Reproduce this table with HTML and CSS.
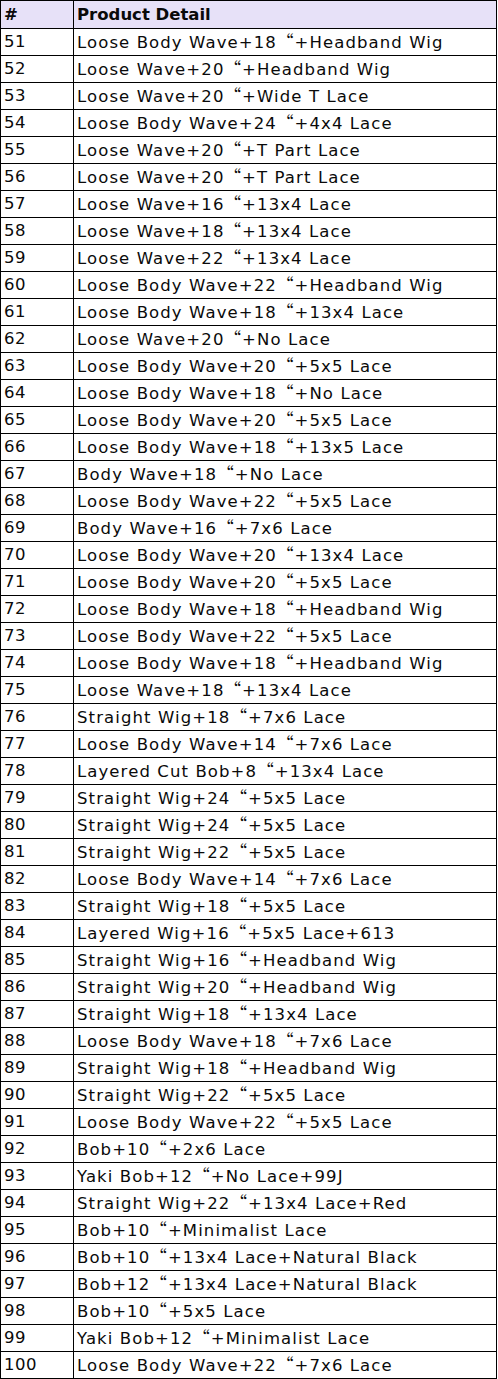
FILE: index.html
```html
<!DOCTYPE html>
<html>
<head>
<meta charset="utf-8">
<link rel="stylesheet" href="styles.css">
</head>
<body>
<table class="grid">
<thead>
<tr><th class="num">#</th><th class="detail">Product Detail</th></tr>
</thead>
<tbody>
<tr><td class="num">51</td><td>Loose Body Wave+18<span class="q">“</span>+Headband Wig</td></tr>
<tr><td class="num">52</td><td>Loose Wave+20<span class="q">“</span>+Headband Wig</td></tr>
<tr><td class="num">53</td><td>Loose Wave+20<span class="q">“</span>+Wide T Lace</td></tr>
<tr><td class="num">54</td><td>Loose Body Wave+24<span class="q">“</span>+4x4 Lace</td></tr>
<tr><td class="num">55</td><td>Loose Wave+20<span class="q">“</span>+T Part Lace</td></tr>
<tr><td class="num">56</td><td>Loose Wave+20<span class="q">“</span>+T Part Lace</td></tr>
<tr><td class="num">57</td><td>Loose Wave+16<span class="q">“</span>+13x4 Lace</td></tr>
<tr><td class="num">58</td><td>Loose Wave+18<span class="q">“</span>+13x4 Lace</td></tr>
<tr><td class="num">59</td><td>Loose Wave+22<span class="q">“</span>+13x4 Lace</td></tr>
<tr><td class="num">60</td><td>Loose Body Wave+22<span class="q">“</span>+Headband Wig</td></tr>
<tr><td class="num">61</td><td>Loose Body Wave+18<span class="q">“</span>+13x4 Lace</td></tr>
<tr><td class="num">62</td><td>Loose Wave+20<span class="q">“</span>+No Lace</td></tr>
<tr><td class="num">63</td><td>Loose Body Wave+20<span class="q">“</span>+5x5 Lace</td></tr>
<tr><td class="num">64</td><td>Loose Body Wave+18<span class="q">“</span>+No Lace</td></tr>
<tr><td class="num">65</td><td>Loose Body Wave+20<span class="q">“</span>+5x5 Lace</td></tr>
<tr><td class="num">66</td><td>Loose Body Wave+18<span class="q">“</span>+13x5 Lace</td></tr>
<tr><td class="num">67</td><td>Body Wave+18<span class="q">“</span>+No Lace</td></tr>
<tr><td class="num">68</td><td>Loose Body Wave+22<span class="q">“</span>+5x5 Lace</td></tr>
<tr><td class="num">69</td><td>Body Wave+16<span class="q">“</span>+7x6 Lace</td></tr>
<tr><td class="num">70</td><td>Loose Body Wave+20<span class="q">“</span>+13x4 Lace</td></tr>
<tr><td class="num">71</td><td>Loose Body Wave+20<span class="q">“</span>+5x5 Lace</td></tr>
<tr><td class="num">72</td><td>Loose Body Wave+18<span class="q">“</span>+Headband Wig</td></tr>
<tr><td class="num">73</td><td>Loose Body Wave+22<span class="q">“</span>+5x5 Lace</td></tr>
<tr><td class="num">74</td><td>Loose Body Wave+18<span class="q">“</span>+Headband Wig</td></tr>
<tr><td class="num">75</td><td>Loose Wave+18<span class="q">“</span>+13x4 Lace</td></tr>
<tr><td class="num">76</td><td>Straight Wig+18<span class="q">“</span>+7x6 Lace</td></tr>
<tr><td class="num">77</td><td>Loose Body Wave+14<span class="q">“</span>+7x6 Lace</td></tr>
<tr><td class="num">78</td><td>Layered Cut Bob+8<span class="q">“</span>+13x4 Lace</td></tr>
<tr><td class="num">79</td><td>Straight Wig+24<span class="q">“</span>+5x5 Lace</td></tr>
<tr><td class="num">80</td><td>Straight Wig+24<span class="q">“</span>+5x5 Lace</td></tr>
<tr><td class="num">81</td><td>Straight Wig+22<span class="q">“</span>+5x5 Lace</td></tr>
<tr><td class="num">82</td><td>Loose Body Wave+14<span class="q">“</span>+7x6 Lace</td></tr>
<tr><td class="num">83</td><td>Straight Wig+18<span class="q">“</span>+5x5 Lace</td></tr>
<tr><td class="num">84</td><td>Layered Wig+16<span class="q">“</span>+5x5 Lace+613</td></tr>
<tr><td class="num">85</td><td>Straight Wig+16<span class="q">“</span>+Headband Wig</td></tr>
<tr><td class="num">86</td><td>Straight Wig+20<span class="q">“</span>+Headband Wig</td></tr>
<tr><td class="num">87</td><td>Straight Wig+18<span class="q">“</span>+13x4 Lace</td></tr>
<tr><td class="num">88</td><td>Loose Body Wave+18<span class="q">“</span>+7x6 Lace</td></tr>
<tr><td class="num">89</td><td>Straight Wig+18<span class="q">“</span>+Headband Wig</td></tr>
<tr><td class="num">90</td><td>Straight Wig+22<span class="q">“</span>+5x5 Lace</td></tr>
<tr><td class="num">91</td><td>Loose Body Wave+22<span class="q">“</span>+5x5 Lace</td></tr>
<tr><td class="num">92</td><td>Bob+10<span class="q">“</span>+2x6 Lace</td></tr>
<tr><td class="num">93</td><td>Yaki Bob+12<span class="q">“</span>+No Lace+99J</td></tr>
<tr><td class="num">94</td><td>Straight Wig+22<span class="q">“</span>+13x4 Lace+Red</td></tr>
<tr><td class="num">95</td><td>Bob+10<span class="q">“</span>+Minimalist Lace</td></tr>
<tr><td class="num">96</td><td>Bob+10<span class="q">“</span>+13x4 Lace+Natural Black</td></tr>
<tr><td class="num">97</td><td>Bob+12<span class="q">“</span>+13x4 Lace+Natural Black</td></tr>
<tr><td class="num">98</td><td>Bob+10<span class="q">“</span>+5x5 Lace</td></tr>
<tr><td class="num">99</td><td>Yaki Bob+12<span class="q">“</span>+Minimalist Lace</td></tr>
<tr><td class="num">100</td><td>Loose Body Wave+22<span class="q">“</span>+7x6 Lace</td></tr>
</tbody>
</table>
</body>
</html>
```

FILE: styles.css
```css
html, body {
  margin: 0;
  padding: 0;
  background: #ffffff;
}

.grid {
  border-collapse: collapse;
  width: 497px;
  table-layout: fixed;
  font-family: "DejaVu Sans", "Noto Sans", sans-serif;
  font-size: 16.5px;
  color: #0a0a0a;
}

.grid th,
.grid td {
  border: 1px solid #000000;
  height: 26px;
  padding: 0 0 0 3px;
  line-height: 18px;
  text-align: left;
  vertical-align: middle;
  white-space: nowrap;
  overflow: hidden;
}

.grid td {
  letter-spacing: 1.1px;
}

.grid thead th {
  height: 27px;
  background: #e7e1f8;
  font-weight: 700;
}

.grid .num {
  width: 69px;
}

.grid td.num {
  letter-spacing: 0.5px;
}

.q {
  font-family: "Noto Sans CJK SC", sans-serif;
  line-height: 18px;
}
```
